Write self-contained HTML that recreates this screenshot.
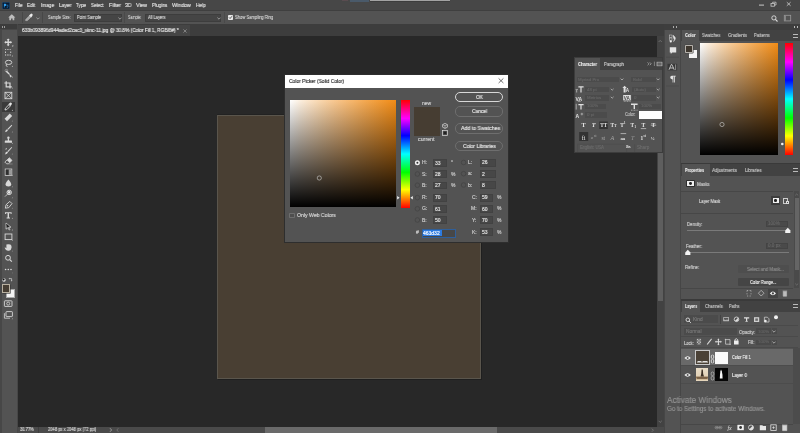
<!DOCTYPE html>
<html><head><meta charset="utf-8">
<style>
*{margin:0;padding:0;box-sizing:border-box}
html,body{width:800px;height:433px;overflow:hidden;background:#535353;font-family:"Liberation Sans",sans-serif;color:#d6d6d6}
.a{position:absolute}
.t{position:absolute;white-space:nowrap;line-height:1;will-change:transform;-webkit-text-stroke:0.15px currentColor}
.t[style*="bold"]{-webkit-text-stroke:0.08px currentColor}
</style></head><body>
<!-- menu bar -->
<div class="a" style="left:0;top:0;width:800px;height:10px;background:#474747"></div>
<div class="a" style="left:0;top:10px;width:800px;height:1px;background:#3f3f3f"></div>
<!-- options bar -->
<div class="a" style="left:0;top:11px;width:800px;height:13px;background:#535353"></div>
<!-- tab bar -->
<div class="a" style="left:17px;top:24px;width:648px;height:12px;background:#3d3d3d"></div>
<div class="a" style="left:17px;top:25px;width:173px;height:11px;background:#454545"></div>
<!-- canvas -->
<div class="a" style="left:18px;top:36px;width:639px;height:391px;background:#282828"></div>
<!-- doc -->
<div class="a" style="left:217px;top:115px;width:264px;height:264px;background:#493f33;border:1px solid #5a554c;box-shadow:1px 1px 0 #1f1f1f,0 -1px 0 #222"></div>
<!-- status bar -->
<div class="a" style="left:17px;top:427px;width:648px;height:6px;background:#4a4a4a"></div>
<div class="a" style="left:265px;top:427px;width:232px;height:6px;background:#6a6a6a"></div>
<!-- vertical scrollbar -->
<div class="a" style="left:657px;top:36px;width:7px;height:391px;background:#424242"></div>
<div class="a" style="left:657.5px;top:60px;width:5.5px;height:241px;background:#5e5e5e"></div>
<!-- left toolbar -->
<div class="a" style="left:0;top:24px;width:18px;height:409px;background:#474747"></div>
<div class="a" style="left:1.5px;top:29.6px;width:15px;height:404px;background:#535353"></div>
<div class="a" style="left:0;top:24px;width:17px;height:5px;background:#3c3c3c"></div>
<div class="a" style="left:2.2px;top:25.8px;width:3.2px;height:1.8px;border-left:1.1px solid #9a9a9a;border-right:1.1px solid #9a9a9a"></div>
<div class="a" style="left:2px;top:102px;width:12.5px;height:9.7px;background:#3a3a3a"></div>
<!-- right dock header -->
<div class="a" style="left:664px;top:24px;width:136px;height:6px;background:#3e3e3e"></div>
<!-- icon strip -->
<div class="a" style="left:664px;top:30px;width:17px;height:403px;background:#535353;border-left:1px solid #464646;border-right:1px solid #464646"></div>
<!-- color panel -->
<div class="a" style="left:681px;top:30px;width:119px;height:133px;background:#535353"></div>
<div class="a" style="left:681px;top:30px;width:119px;height:11px;background:#424242"></div>
<div class="a" style="left:682px;top:30px;width:17px;height:11px;background:#535353"></div>
<div class="a" style="left:700px;top:43px;width:78px;height:112px;background:linear-gradient(to top,#000,rgba(0,0,0,0)),linear-gradient(to right,rgb(255,255,255) 0%,rgb(253,239,222) 10%,rgb(252,226,196) 20%,rgb(250,214,171) 30%,rgb(249,202,148) 40%,rgb(248,191,126) 50%,rgb(247,181,104) 60%,rgb(245,170,83) 70%,rgb(244,160,62) 80%,rgb(243,150,42) 90%,rgb(242,140,22) 100%)"></div>
<div class="a" style="left:785px;top:43px;width:8px;height:112px;background:linear-gradient(to bottom,#f00,#f0f 17%,#00f 33%,#0ff 50%,#0f0 67%,#ff0 83%,#f00)"></div>
<!-- properties -->
<div class="a" style="left:681px;top:163px;width:119px;height:136px;background:#535353;border-top:1px solid #3a3a3a"></div>
<div class="a" style="left:681px;top:164px;width:119px;height:12px;background:#424242"></div>
<div class="a" style="left:682px;top:164px;width:28px;height:12px;background:#535353"></div>
<!-- layers -->
<div class="a" style="left:681px;top:299px;width:119px;height:134px;background:#535353;border-top:2px solid #3a3a3a"></div>
<div class="a" style="left:681px;top:301px;width:119px;height:11px;background:#424242"></div>
<div class="a" style="left:682px;top:301px;width:18px;height:11px;background:#535353"></div>
<!-- character panel -->
<div class="a" style="left:574px;top:57px;width:89px;height:96px;background:#535353;border:1px solid #3c3c3c"></div>
<div class="a" style="left:575px;top:58px;width:87px;height:12px;background:#424242"></div>
<div class="a" style="left:575px;top:58px;width:25px;height:12px;background:#535353"></div>
<!-- dialog -->
<div class="a" style="left:284px;top:74px;width:225px;height:169px;background:#535353;border:1px solid #2e2e2e"></div>
<div class="a" style="left:285px;top:75px;width:223px;height:13px;background:#fff"></div>
<div class="a" style="left:290px;top:100px;width:106px;height:107px;background:linear-gradient(to top,#000,rgba(0,0,0,0)),linear-gradient(to right,rgb(255,255,255) 0%,rgb(253,239,222) 10%,rgb(252,226,196) 20%,rgb(250,214,171) 30%,rgb(249,202,148) 40%,rgb(248,191,126) 50%,rgb(247,181,104) 60%,rgb(245,170,83) 70%,rgb(244,160,62) 80%,rgb(243,150,42) 90%,rgb(242,140,22) 100%)"></div>
<div class="a" style="left:401px;top:100px;width:8px;height:108px;background:linear-gradient(to bottom,#f00,#f0f 17%,#00f 33%,#0ff 50%,#0f0 67%,#ff0 83%,#f00)"></div>
<div class="a" style="left:414px;top:107px;width:26px;height:29px;background:#463d32"></div>

<div class="a" style="left:342px;top:0;width:6px;height:1.4px;background:#5a4c50"></div>
<div class="a" style="left:350px;top:0;width:19px;height:1.5px;background:#4a5a6a"></div>
<div class="a" style="left:370px;top:0;width:80px;height:1.3px;background:#a2a2a2"></div>
<div class="a" style="left:370px;top:1.3px;width:80px;height:0.8px;background:#3c3c3c"></div>
<!-- ===== MENU TEXT ===== -->
<svg class="a" style="left:1.5px;top:1.5px" width="8" height="7.5" viewBox="0 0 8 7.5"><rect x="0.3" y="0.3" width="7.4" height="6.9" rx="1.2" fill="#0a1a30" stroke="#1f5a8e" stroke-width="0.5"/><path d="M1.9 5.6V1.8H3.2Q4.4 1.8 4.4 2.9Q4.4 4 3.2 4H2.6V5.6Z" fill="#2ea0f0"/><path d="M6.4 3.2Q5.8 2.9 5.3 3.1Q4.9 3.4 5.4 3.8Q6.3 4.2 6 5Q5.5 5.6 4.7 5.3" fill="none" stroke="#2ea0f0" stroke-width="0.55"/></svg>
<div id="menu" style="font-size:5.6px;color:#e2e2e2">
<div class="t" style="left:14.62px;top:3.0px;transform:scaleX(0.833);transform-origin:0 0">File</div>
<div class="t" style="left:27.00px;top:3.0px;transform:scaleX(0.850);transform-origin:0 0">Edit</div>
<div class="t" style="left:40.58px;top:3.0px;transform:scaleX(0.844);transform-origin:0 0">Image</div>
<div class="t" style="left:58.58px;top:3.0px;transform:scaleX(0.893);transform-origin:0 0">Layer</div>
<div class="t" style="left:76.00px;top:3.0px;transform:scaleX(0.833);transform-origin:0 0">Type</div>
<div class="t" style="left:91.00px;top:3.0px;transform:scaleX(0.812);transform-origin:0 0">Select</div>
<div class="t" style="left:109.00px;top:3.0px;transform:scaleX(0.958);transform-origin:0 0">Filter</div>
<div class="t" style="left:125.00px;top:3.0px;transform:scaleX(0.929);transform-origin:0 0">3D</div>
<div class="t" style="left:136.00px;top:3.0px;transform:scaleX(0.917);transform-origin:0 0">View</div>
<div class="t" style="left:152.00px;top:3.0px;transform:scaleX(0.833);transform-origin:0 0">Plugins</div>
<div class="t" style="left:172.00px;top:3.0px;transform:scaleX(0.950);transform-origin:0 0">Window</div>
<div class="t" style="left:196.00px;top:3.0px;transform:scaleX(0.833);transform-origin:0 0">Help</div>
</div>
<!-- window controls -->
<svg class="a" style="left:756px;top:0" width="40" height="10" viewBox="756 0 40 10">
<path d="M759 5.1H764" stroke="#c8c8c8" stroke-width="1"/>
<rect x="771" y="3.4" width="3.4" height="2.8" fill="none" stroke="#c8c8c8" stroke-width="0.8"/>
<path d="M772.6 3.2V2.2H776V5H774.6" fill="none" stroke="#c8c8c8" stroke-width="0.8"/>
<path d="M786.8 2.2L790.6 5.8M790.6 2.2L786.8 5.8" stroke="#d0d0d0" stroke-width="0.8"/>
</svg>
<!-- ===== OPTIONS BAR ===== -->
<svg class="a" style="left:7.8px;top:14.4px" width="8" height="7" viewBox="0 0 8 7"><path d="M3.8 0.2L0.2 3.4H1.3V6.3H3V4.4H4.6V6.3H6.3V3.4H7.4Z" fill="#bdbdbd"/></svg>
<div class="a" style="left:21.6px;top:12px;width:0.8px;height:11px;background:#474747"></div>
<div class="a" style="left:41.6px;top:12px;width:0.8px;height:11px;background:#474747"></div>
<svg class="a" style="left:25px;top:13px" width="8" height="9" viewBox="0 0 8 9"><path d="M0.6 7.6L1 6.2L4.4 2.8L5.8 4.2L2.4 7.6Z" fill="#a8a8a8" stroke="#c8c8c8" stroke-width="0.5"/><path d="M4 2.4L5.6 0.9Q6.6 0.3 7.3 1Q8 1.8 7.4 2.8L6.2 4.6Z" fill="#ececec"/></svg>
<svg class="a" style="left:36px;top:17px" width="4" height="3" viewBox="0 0 4 3"><path d="M0.4 0.6L2 2.2L3.6 0.6" fill="none" stroke="#bbb" stroke-width="0.7"/></svg>
<div class="t" style="left:48.07px;top:14.8px;font-size:5.3px;color:#cfcfcf;transform:scaleX(0.727);transform-origin:0 0">Sample Size:</div>
<div class="a" style="left:74px;top:14px;width:48px;height:7.5px;background:#454545;border:0.5px solid #3d3d3d"></div>
<div class="t" style="left:76.62px;top:15.3px;font-size:5.2px;color:#d8d8d8;transform:scaleX(0.774);transform-origin:0 0">Point Sample</div>
<svg class="a" style="left:117.5px;top:17px" width="4" height="3" viewBox="0 0 4 3"><path d="M0.4 0.6L2 2.2L3.6 0.6" fill="none" stroke="#bbb" stroke-width="0.7"/></svg>
<div class="a" style="left:124px;top:12px;width:1px;height:11px;background:#4a4a4a"></div>
<div class="t" style="left:128.00px;top:14.8px;font-size:5.3px;color:#cfcfcf;transform:scaleX(0.690);transform-origin:0 0">Sample:</div>
<div class="a" style="left:145px;top:14px;width:76px;height:7.5px;background:#454545;border:0.5px solid #3d3d3d"></div>
<div class="t" style="left:148.00px;top:15.3px;font-size:5.2px;color:#d8d8d8;transform:scaleX(0.761);transform-origin:0 0">All Layers</div>
<svg class="a" style="left:216.5px;top:17px" width="4" height="3" viewBox="0 0 4 3"><path d="M0.4 0.6L2 2.2L3.6 0.6" fill="none" stroke="#bbb" stroke-width="0.7"/></svg>
<div class="a" style="left:224px;top:12px;width:1px;height:11px;background:#4a4a4a"></div>
<div class="a" style="left:228px;top:15px;width:4.5px;height:4.5px;background:#e8e8e8;border-radius:0.8px"></div>
<svg class="a" style="left:228px;top:15px" width="5" height="5" viewBox="0 0 5 5"><path d="M1 2.4L2.1 3.5L4 1.2" fill="none" stroke="#333" stroke-width="0.8"/></svg>
<div class="t" style="left:234.64px;top:14.8px;font-size:5.3px;color:#d2d2d2;transform:scaleX(0.776);transform-origin:0 0">Show Sampling Ring</div>
<svg class="a" style="left:771px;top:14.5px" width="7" height="7" viewBox="0 0 7 7"><circle cx="2.9" cy="2.9" r="2.1" fill="none" stroke="#e0e0e0" stroke-width="0.9"/><path d="M4.4 4.4L6.5 6.5" stroke="#e0e0e0" stroke-width="1.1"/></svg>
<svg class="a" style="left:783px;top:14px" width="9" height="8" viewBox="0 0 9 8"><rect x="1.3" y="1.3" width="6.4" height="5.6" fill="none" stroke="#9a9a9a" stroke-width="0.8"/><rect x="1.3" y="1.3" width="1.6" height="5.6" fill="#8a8a8a"/></svg>
<!-- tab text -->
<div class="t" style="left:22.00px;top:28px;font-size:5.1px;color:#e6e6e6;letter-spacing:-0.05px;transform:scaleX(0.946);transform-origin:0 0">633b093896d944aded2cac3_sknc-11.jpg @ 30.8% (Color Fill 1, RGB/8#) *</div>
<svg class="a" style="left:182.5px;top:28.5px" width="4" height="4" viewBox="0 0 4 4"><path d="M0.4 0.4L3.6 3.6M3.6 0.4L0.4 3.6" stroke="#aaa" stroke-width="0.6"/></svg>


<svg class="a" style="left:640px;top:36px" width="25" height="397" viewBox="640 36 25 397">
<path d="M658.6 42L660.2 40.4L661.8 42" fill="none" stroke="#8a8a8a" stroke-width="0.6"/>
<path d="M658.6 420.8L660.2 422.4L661.8 420.8" fill="none" stroke="#8a8a8a" stroke-width="0.6"/>
<path d="M651.8 428.6L653.4 430.2L651.8 431.8" fill="none" stroke="#8a8a8a" stroke-width="0.6"/>
</svg>
<!-- ===== TOOLBAR ICONS ===== -->
<svg class="a" style="left:0;top:0" width="18" height="433" viewBox="0 0 18 433" fill="#d8d8d8" stroke="none">
<g id="tri" fill="#bdbdbd"><path d="M13.2 45.2L13.2 46.6L11.8 46.6Z"/></g>
<!-- move -->
<path d="M8.2 38.4L9.8 40.1H8.9V41.6H10.5V40.8L12.1 42.3L10.5 43.8V43H8.9V44.6H9.8L8.2 46.2L6.6 44.6H7.5V43H5.9V43.8L4.3 42.3L5.9 40.8V41.6H7.5V40.1H6.6Z"/>
<path d="M13.2 44.8V46.2H11.8Z" fill="#aaa"/>
<!-- marquee -->
<path d="M5 49.2h1.2v0.9h-1.2zM7.2 49.2h1.4v0.9h-1.4zM9.6 49.2h1.2v0.9h-1.2zM5 51.6h0.9v1.4h-0.9zM10.3 51.6h0.9v1.4h-0.9zM5 54.6h1.2v0.9h-1.2zM7.2 54.6h1.4v0.9h-1.4zM9.6 54.6h1.2v0.9h-1.2z"/>
<path d="M13 55V56.4H11.6Z" fill="#aaa"/>
<!-- lasso -->
<ellipse cx="8.6" cy="62.4" rx="3.2" ry="2.1" fill="none" stroke="#d8d8d8" stroke-width="0.9"/>
<path d="M6.4 64L6.2 66L7.6 66.6" fill="none" stroke="#d8d8d8" stroke-width="0.8"/>
<path d="M13 65.6V67H11.6Z" fill="#aaa"/>
<!-- quick select -->
<path d="M6.6 70.6L9.6 73.6L8.6 74.6L5.6 71.6Z"/>
<path d="M9 73.6L12 76.2L10.2 77.4Z"/>
<circle cx="6.4" cy="70.6" r="1.3" fill="none" stroke="#bbb" stroke-width="0.5"/>
<path d="M13 76.2V77.6H11.6Z" fill="#aaa"/>
<!-- crop -->
<path d="M6.2 81.2V86.8H11.8" fill="none" stroke="#d8d8d8" stroke-width="1.2"/>
<path d="M4.4 83H10V88.6" fill="none" stroke="#d8d8d8" stroke-width="1.2"/>
<path d="M13 87.2V88.6H11.6Z" fill="#aaa"/>
<!-- frame -->
<rect x="5" y="92.3" width="6.8" height="6.4" fill="none" stroke="#d8d8d8" stroke-width="0.9"/>
<path d="M5 92.3L11.8 98.7M11.8 92.3L5 98.7" stroke="#d8d8d8" stroke-width="0.7"/>
<!-- eyedropper -->
<path d="M5 110L5.4 108.2L9 104.6L10.4 106L6.8 109.6Z" fill="none" stroke="#e0e0e0" stroke-width="0.9"/>
<path d="M8.6 104L10 102.8Q11 102.2 11.6 102.9Q12.3 103.6 11.6 104.6L10.6 106Z" fill="#e6e6e6"/>
<path d="M13 109.6V111H11.6Z" fill="#aaa"/>
<!-- healing -->
<path d="M4.6 118.8L9.8 113.6L12.2 116L7 121.2Z"/>
<path d="M13 120.2V121.6H11.6Z" fill="#888"/>
<!-- brush -->
<path d="M11.6 124.8L12.2 125.4L8.2 129.8L7.4 129Z"/>
<path d="M7.2 129.2L8 130Q7.6 132 4.8 132.2Q5.6 131.4 5.6 130.4Q6 129.4 7.2 129.2Z"/>
<path d="M13 131V132.4H11.6Z" fill="#888"/>
<!-- stamp -->
<circle cx="8.4" cy="137.8" r="1.2"/>
<path d="M7.8 138.8H9V140.4H11.6Q12 140.6 12 141.6V142.8H4.8V141.6Q4.8 140.6 5.2 140.4H7.8Z"/>
<path d="M13 142.6V144H11.6Z" fill="#999"/>
<!-- history brush -->
<path d="M11.6 147L12.2 147.6L8.2 152L7.4 151.2Z"/>
<path d="M7.2 151.4L8 152.2Q7.6 154.2 4.8 154.4Q5.6 153.6 5.6 152.6Q6 151.6 7.2 151.4Z"/>
<path d="M4.8 149.2L7 147.8L6.6 149.6Z" fill="#cfcfcf"/>
<path d="M13 153.2V154.6H11.6Z" fill="#888"/>
<!-- eraser -->
<path d="M9.4 157.8L12 160.4L8.6 163.8H6.6L4.8 162L9.4 157.8Z" fill="none" stroke="#d8d8d8" stroke-width="0.8"/>
<path d="M9.4 157.8L12 160.4L9.6 162.8L7 160.2Z"/>
<path d="M8.6 164H12.6" stroke="#aaa" stroke-width="0.5"/>
<!-- gradient -->
<rect x="5.2" y="169" width="6.6" height="6.4" fill="none" stroke="#d0d0d0" stroke-width="0.8"/>
<rect x="5.8" y="169.6" width="3" height="5.2" fill="#303030"/>
<rect x="8.8" y="169.6" width="2.6" height="5.2" fill="#9a9a9a"/>
<path d="M13 174.6V176H11.6Z" fill="#999"/>
<!-- blur -->
<path d="M8.4 179.6Q11.2 183 11.2 184.2Q11.2 186.4 8.4 186.4Q5.6 186.4 5.6 184.2Q5.6 183 8.4 179.6Z"/>
<path d="M13 185.8V187.2H11.6Z" fill="#888"/>
<!-- dodge -->
<circle cx="9.2" cy="192.4" r="2.2" fill="none" stroke="#e0e0e0" stroke-width="1"/>
<circle cx="9.2" cy="192.4" r="1.3" fill="#e8e8e8"/>
<path d="M7.6 194L5 196.6" stroke="#d8d8d8" stroke-width="0.8"/>
<path d="M13 196.8V198.2H11.6Z" fill="#888"/>
<!-- pen -->
<path d="M9.8 201.4L12 203.6L8.8 207.6L5.4 208.2L6 204.8Z" fill="none" stroke="#d8d8d8" stroke-width="0.9"/>
<circle cx="7.6" cy="205.8" r="0.7"/>
<path d="M13 207.4V208.8H11.6Z" fill="#888"/>
<!-- type -->
<path d="M5 212.2H11.6V214H10.8L10.6 213.2H9V217.6H10V218.4H6.6V217.6H7.6V213.2H6L5.8 214H5Z"/>
<path d="M13 217.6V219H11.6Z" fill="#999"/>
<!-- path select -->
<path d="M6 223L11 227.2L8.6 227.4L10 229.6L9.2 230L7.8 227.8L6 229.2Z" fill="none" stroke="#d8d8d8" stroke-width="0.7"/>
<path d="M6.2 223.6L9.2 226.6L7 227.4Z" fill="#202020"/>
<path d="M13 229V230.4H11.6Z" fill="#999"/>
<!-- rect -->
<rect x="5.1" y="234" width="6.8" height="5.6" fill="none" stroke="#d8d8d8" stroke-width="0.9"/>
<path d="M13 239.6V241H11.6Z" fill="#999"/>
<!-- hand -->
<path d="M6.4 244.4Q8.6 243.8 10.4 244.6Q11.8 245.6 11.6 247.6Q11.4 250.2 9 250.8Q7 251 5.8 249.8L4.6 247.8Q5 247.2 5.8 247.8L6.4 248.2Z"/>
<path d="M13 250.2V251.6H11.6Z" fill="#888"/>
<!-- zoom -->
<circle cx="8" cy="257.8" r="2.4" fill="none" stroke="#d8d8d8" stroke-width="1"/>
<path d="M9.8 259.6L11.8 261.6" stroke="#d8d8d8" stroke-width="1.2"/>
<!-- more -->
<circle cx="5.6" cy="269.5" r="0.8"/><circle cx="8.3" cy="269.5" r="0.8"/><circle cx="11" cy="269.5" r="0.8"/>
<path d="M13 272.2V273.2H12Z" fill="#888"/>
<!-- default colors / swap -->
<circle cx="4" cy="280" r="1.7" fill="#e6e6e6"/>
<circle cx="3.6" cy="279.6" r="1" fill="#111"/>
<path d="M9.2 278.6H11.6V281" fill="none" stroke="#cfcfcf" stroke-width="0.7"/>
<path d="M8.6 278.6L9.6 277.8V279.4Z M11.6 281.6L10.8 280.6H12.4Z" fill="#cfcfcf"/>
<!-- quick mask -->
<rect x="4.4" y="300.8" width="7.6" height="5.6" rx="0.6" fill="none" stroke="#d8d8d8" stroke-width="0.9"/>
<circle cx="8.2" cy="303.6" r="1.5" fill="none" stroke="#d8d8d8" stroke-width="0.8"/>
<!-- screen mode -->
<rect x="6" y="311.6" width="6.4" height="5" rx="0.6" fill="none" stroke="#d8d8d8" stroke-width="0.9"/>
<path d="M4.4 313.2V318.2H10" fill="none" stroke="#d8d8d8" stroke-width="0.8"/>
<path d="M13 317.8V319.2H11.6Z" fill="#999"/>
</svg>
<div class="a" style="left:6px;top:289px;width:8.6px;height:9px;background:#f4f4f4;border:0.5px solid #aaa"></div>
<div class="a" style="left:2px;top:284.4px;width:7.6px;height:8.4px;background:#463d32;border:0.8px solid #b8b0a0;box-shadow:0.6px 0.6px 0 #333"></div>

<!-- ===== RIGHT DOCK CONTENT ===== -->
<div class="a" style="left:673px;top:26.2px;width:4px;height:2.2px;border-left:1.4px solid #aaa;border-right:1.4px solid #aaa"></div>
<div class="a" style="left:794px;top:26.2px;width:4px;height:2.2px;border-left:1.4px solid #bbb;border-right:1.4px solid #bbb"></div>
<!-- color tabs -->
<div class="t" style="left:684.71px;top:32.7px;font-size:5.3px;font-weight:bold;color:#f0f0f0;transform:scaleX(0.775);transform-origin:0 0">Color</div>
<div class="t" style="left:702.15px;top:32.7px;font-size:5.3px;color:#c4c4c4;transform:scaleX(0.800);transform-origin:0 0">Swatches</div>
<div class="t" style="left:728.00px;top:32.7px;font-size:5.3px;color:#c4c4c4;transform:scaleX(0.826);transform-origin:0 0">Gradients</div>
<div class="t" style="left:754.00px;top:32.7px;font-size:5.3px;color:#c4c4c4;transform:scaleX(0.800);transform-origin:0 0">Patterns</div>
<div class="a" style="left:793px;top:33.5px;width:5px;height:4px;border-top:0.8px solid #bbb;border-bottom:0.8px solid #bbb;background:linear-gradient(#424242 40%,#bbb 40%,#bbb 60%,#424242 60%)"></div>
<!-- fg/bg swatches color panel -->
<div class="a" style="left:689.1px;top:49.9px;width:7.9px;height:7.9px;background:#f4f4f4"></div>
<div class="a" style="left:685px;top:45.3px;width:8.2px;height:8.2px;background:#3e372f;border:1px solid #b4b0aa;border-radius:0.8px;box-shadow:0 0 0 0.5px #444"></div>
<svg class="a" style="left:680px;top:40px" width="120" height="120" viewBox="680 40 120 120">
<circle cx="722" cy="124.5" r="2.1" fill="none" stroke="#d0d0d0" stroke-width="0.6"/>
<circle cx="782.3" cy="144" r="1.3" fill="#f0f0f0"/>
</svg>
<!-- properties tabs -->
<div class="t" style="left:685.00px;top:167.5px;font-size:5.3px;font-weight:bold;color:#f0f0f0;transform:scaleX(0.725);transform-origin:0 0">Properties</div>
<div class="t" style="left:712.00px;top:167.5px;font-size:5.3px;color:#c4c4c4;transform:scaleX(0.855);transform-origin:0 0">Adjustments</div>
<div class="t" style="left:744.91px;top:167.5px;font-size:5.3px;color:#c4c4c4;transform:scaleX(0.815);transform-origin:0 0">Libraries</div>
<div class="a" style="left:793px;top:167.8px;width:5px;height:4px;border-top:0.8px solid #bbb;border-bottom:0.8px solid #bbb;background:linear-gradient(#424242 40%,#bbb 40%,#bbb 60%,#424242 60%)"></div>
<div class="a" style="left:686.3px;top:179.8px;width:8.4px;height:7.6px;background:#2e2e2e;border-radius:1px"></div>
<div class="a" style="left:687.3px;top:180.9px;width:6.4px;height:5.4px;background:#f0f0f0"></div>
<div class="a" style="left:689.1px;top:182.2px;width:2.8px;height:2.8px;background:#222;border-radius:50%"></div>
<div class="t" style="left:696.68px;top:181.5px;font-size:5px;color:#d0d0d0;transform:scaleX(0.864);transform-origin:0 0">Masks</div>
<div class="a" style="left:681px;top:190.5px;width:112px;height:0.8px;background:#474747"></div>
<div class="t" style="left:699.00px;top:198.8px;font-size:5.1px;color:#d8d8d8;transform:scaleX(0.808);transform-origin:0 0">Layer Mask</div>
<div class="a" style="left:771px;top:196px;width:9px;height:8.6px;background:#3c3c3c"></div>
<div class="a" style="left:772.5px;top:198px;width:6px;height:5px;background:#f0f0f0"></div>
<div class="a" style="left:774.3px;top:199.3px;width:2.4px;height:2.4px;background:#222;border-radius:50%"></div>
<div class="a" style="left:783px;top:197.5px;width:5px;height:6px;border:0.7px dashed #ccc"></div>
<div class="a" style="left:786px;top:201px;width:3.4px;height:3.4px;background:#535353;border:0.7px solid #ddd"></div>
<div class="a" style="left:681px;top:212.5px;width:112px;height:0.8px;background:#474747"></div>
<!-- prop scrollbar -->
<div class="a" style="left:794px;top:191px;width:5.4px;height:97px;background:#4a4a4a"></div>
<div class="a" style="left:794.6px;top:198px;width:4.2px;height:72px;background:#656565"></div>
<svg class="a" style="left:794px;top:192px" width="6" height="96" viewBox="0 0 6 96"><path d="M1.2 3.4L2.7 2L4.2 3.4" fill="none" stroke="#888" stroke-width="0.5"/><path d="M1.2 91.6L2.7 93L4.2 91.6" fill="none" stroke="#888" stroke-width="0.5"/></svg>
<div class="t" style="left:687.19px;top:221.8px;font-size:5px;color:#cfcfcf;transform:scaleX(0.844);transform-origin:0 0">Density:</div>
<div class="a" style="left:765.5px;top:221px;width:22px;height:6px;background:#4a4a4a;border:0.5px solid #444"></div>
<div class="t" style="left:767.5px;top:222.2px;font-size:4.6px;color:#666666">100%</div>
<div class="a" style="left:687px;top:229.5px;width:102px;height:1px;background:#7a7a7a"></div>
<svg class="a" style="left:784px;top:227px" width="8" height="7" viewBox="0 0 8 7"><path d="M3.8 0.8L6.4 3.4V6H1.2V3.4Z" fill="#f2f2f2"/></svg>
<div class="t" style="left:686.38px;top:243.8px;font-size:5px;color:#cfcfcf;transform:scaleX(0.859);transform-origin:0 0">Feather:</div>
<div class="a" style="left:765.5px;top:242.8px;width:22px;height:6px;background:#4a4a4a;border:0.5px solid #444"></div>
<div class="t" style="left:767.5px;top:244px;font-size:4.6px;color:#666666">0.0 px</div>
<div class="a" style="left:687px;top:251.5px;width:102px;height:1px;background:#7a7a7a"></div>
<svg class="a" style="left:684px;top:249px" width="8" height="7" viewBox="0 0 8 7"><path d="M3.8 0.8L6.4 3.4V6H1.2V3.4Z" fill="#f2f2f2"/></svg>
<div class="t" style="left:685.21px;top:264.8px;font-size:5px;color:#cfcfcf;transform:scaleX(0.886);transform-origin:0 0">Refine:</div>
<div class="a" style="left:738px;top:265.3px;width:51px;height:7.7px;background:#4e4e4e;border-radius:1px"></div>
<div class="t" style="left:746.60px;top:266.7px;font-size:5px;color:#8c8c8c;transform:scaleX(0.897);transform-origin:0 0">Select and Mask...</div>
<div class="a" style="left:738px;top:278.3px;width:51px;height:8.2px;background:#454545;border-radius:1px"></div>
<div class="t" style="left:750.40px;top:280px;font-size:5px;color:#eeeeee;transform:scaleX(0.819);transform-origin:0 0">Color Range...</div>
<div class="a" style="left:681px;top:288px;width:112px;height:0.6px;background:#474747"></div>
<div class="a" style="left:768px;top:288.6px;width:9.8px;height:9.8px;background:#444"></div>
<svg class="a" style="left:740px;top:286px" width="60" height="14" viewBox="740 286 60 14">
<path d="M747 290.5h1.2M749.6 290.5h1.2M747 296h1.2M749.6 296h1.2M747 290.5v1.2M747 293.2v1.2M751 290.5v1.2M751 293.2v1.2" stroke="#bbb" stroke-width="0.7"/>
<path d="M761.2 290.3L764 293.2L761.2 296L758.4 293.2Z" fill="none" stroke="#bbb" stroke-width="0.8"/>
<path d="M769.8 293.4Q772.9 289.8 776 293.4Q772.9 297 769.8 293.4Z" fill="#f0f0f0"/>
<circle cx="772.9" cy="293.4" r="1.1" fill="#444"/>
<path d="M782.6 291h4.6M783.2 291.6h3.4v4.6h-3.4Z" fill="#bdbdbd" stroke="#bdbdbd" stroke-width="0.6"/>
</svg>
<!-- layers tabs -->
<div class="t" style="left:684.85px;top:303.6px;font-size:5.3px;font-weight:bold;color:#f0f0f0;transform:scaleX(0.718);transform-origin:0 0">Layers</div>
<div class="t" style="left:704.64px;top:303.6px;font-size:5.3px;color:#c4c4c4;transform:scaleX(0.795);transform-origin:0 0">Channels</div>
<div class="t" style="left:729.32px;top:303.6px;font-size:5.3px;color:#c4c4c4;transform:scaleX(0.757);transform-origin:0 0">Paths</div>
<div class="a" style="left:793px;top:304.3px;width:5px;height:4px;border-top:0.8px solid #bbb;border-bottom:0.8px solid #bbb;background:linear-gradient(#424242 40%,#bbb 40%,#bbb 60%,#424242 60%)"></div>
<div class="a" style="left:684px;top:315px;width:34px;height:8.4px;background:#4b4b4b"></div>
<svg class="a" style="left:685px;top:317px" width="7" height="7" viewBox="0 0 7 7"><circle cx="2.8" cy="2.8" r="1.8" fill="none" stroke="#e0e0e0" stroke-width="0.9"/><path d="M4.1 4.1L5.8 5.8" stroke="#e0e0e0" stroke-width="1"/></svg>
<div class="t" style="left:692.5px;top:318.2px;font-size:4.8px;color:#7a7a7a">Kind</div>
<div class="a" style="left:720px;top:315px;width:0.6px;height:9px;background:#444"></div>
<svg class="a" style="left:720px;top:312px" width="62" height="14" viewBox="720 312 62 14">
<rect x="723.3" y="317.2" width="5.6" height="4" fill="#cfcfcf"/>
<rect x="723.9" y="317.8" width="4.4" height="1.8" fill="#555"/>
<path d="M723.9 320.2L725.6 318.9L726.8 319.8L727.4 319.3L728.3 320.2Z" fill="#555"/>
<circle cx="736.5" cy="319.3" r="2.3" fill="none" stroke="#e0e0e0" stroke-width="0.8"/>
<path d="M738.1 317.7A2.3 2.3 0 0 1 734.9 320.9Z" fill="#e0e0e0"/>
<path d="M744 317.2H749.2V318.4H747.2V321.2H748V321.8H745.2V321.2H746V318.4H744Z" fill="#e0e0e0"/>
<rect x="754" y="317.2" width="5.2" height="4.8" fill="#d0d0d0"/>
<rect x="755.3" y="318.4" width="2.6" height="2.4" fill="#6a6a6a"/>
<path d="M764.4 317.2H767.4L769 318.8V322H764.4Z" fill="none" stroke="#d8d8d8" stroke-width="0.7"/>
<circle cx="765.4" cy="321" r="1.3" fill="#ececec"/>
<circle cx="776" cy="317.2" r="2" fill="#f0f0f0"/>
</svg>
<div class="a" style="left:681px;top:325.4px;width:117px;height:0.6px;background:#4a4a4a"></div>
<div class="a" style="left:684px;top:328px;width:53px;height:6.5px;background:#4b4b4b"></div>
<div class="t" style="left:686px;top:330px;font-size:4.8px;color:#767676">Normal</div>
<div class="t" style="left:738.67px;top:329.6px;font-size:5px;color:#d0d0d0;transform:scaleX(0.867);transform-origin:0 0">Opacity:</div>
<div class="a" style="left:756.3px;top:328.2px;width:15px;height:5.6px;background:#4a4a4a"></div>
<div class="t" style="left:758px;top:330px;font-size:4.4px;color:#626262">100%</div>
<div class="a" style="left:772px;top:328.2px;width:4.8px;height:5.6px;background:#4a4a4a"></div>
<svg class="a" style="left:772.4px;top:329.6px" width="4" height="3" viewBox="0 0 4 3"><path d="M0.4 0.6L2 2.2L3.6 0.6" fill="none" stroke="#ccc" stroke-width="0.7"/></svg>
<div class="a" style="left:681px;top:336.4px;width:117px;height:0.6px;background:#4a4a4a"></div>
<div class="t" style="left:684.00px;top:340.6px;font-size:5px;color:#d0d0d0;transform:scaleX(0.825);transform-origin:0 0">Lock:</div>
<svg class="a" style="left:695px;top:337px" width="46" height="10" viewBox="695 337 46 10">
<path d="M697 339h1.3v1.3h-1.3zM699.6 339h1.3v1.3h-1.3zM698.3 340.3h1.3v1.3h-1.3zM697 341.6h1.3v1.3h-1.3zM699.6 341.6h1.3v1.3h-1.3zM698.3 342.9h1.3v1.3h-1.3z" fill="#c8c8c8"/>
<rect x="697" y="339" width="3.9" height="5.2" fill="none" stroke="#aaa" stroke-width="0.3"/>
<path d="M711.2 338.6L707.2 343.6L706.8 345L708 344.2L712 339.2Z" fill="#d8d8d8"/>
<path d="M718.4 338.4L719.6 339.6H718.9V341.3H720.6V340.6L721.8 341.8L720.6 343V342.3H718.9V344H719.6L718.4 345.2L717.2 344H717.9V342.3H716.2V343L715 341.8L716.2 340.6V341.3H717.9V339.6H717.2Z" fill="#e0e0e0"/>
<path d="M725.6 338.8V344.2H730.8M724.8 339.6H730V345" fill="none" stroke="#d8d8d8" stroke-width="0.7"/>
<rect x="734" y="340.6" width="4.6" height="4" rx="0.5" fill="#eeeeee"/>
<path d="M734.9 340.8V339.6Q736.3 337.8 737.7 339.6V340.8" fill="none" stroke="#eeeeee" stroke-width="0.8"/>
</svg>
<div class="t" style="left:748.08px;top:340.6px;font-size:4.8px;color:#cfcfcf;transform:scaleX(0.833);transform-origin:0 0">Fill:</div>
<div class="a" style="left:756.3px;top:339.6px;width:15px;height:5.6px;background:#4a4a4a"></div>
<div class="t" style="left:758px;top:339.8px;font-size:4.4px;color:#626262">100%</div>
<div class="a" style="left:772px;top:339.6px;width:4.8px;height:5.6px;background:#4a4a4a"></div>
<svg class="a" style="left:772.4px;top:341px" width="4" height="3" viewBox="0 0 4 3"><path d="M0.4 0.6L2 2.2L3.6 0.6" fill="none" stroke="#ccc" stroke-width="0.7"/></svg>
<div class="a" style="left:681px;top:347.4px;width:117px;height:0.6px;background:#4a4a4a"></div>
<!-- layer rows -->
<div class="a" style="left:681px;top:349.2px;width:112px;height:15.6px;background:#696969"></div>
<div class="a" style="left:681px;top:365px;width:112px;height:0.6px;background:#4c4c4c"></div>
<div class="a" style="left:681px;top:383px;width:112px;height:0.6px;background:#4c4c4c"></div>
<div class="a" style="left:793px;top:347.5px;width:7px;height:76px;background:#4c4c4c"></div>
<svg class="a" style="left:683px;top:354px" width="10" height="26" viewBox="683 354 10 26">
<path d="M684.4 358Q687.6 354.6 690.8 358Q687.6 361.4 684.4 358Z" fill="#f0f0f0"/><circle cx="687.6" cy="358" r="1" fill="#555"/>
<path d="M684.4 375Q687.6 371.6 690.8 375Q687.6 378.4 684.4 375Z" fill="#f0f0f0"/><circle cx="687.6" cy="375" r="1" fill="#555"/>
</svg>
<div class="a" style="left:694.5px;top:350.2px;width:15.5px;height:14.6px;background:#4a4136;border:1px solid #c8c8c8"></div>
<div class="a" style="left:696.5px;top:360.5px;width:11.5px;height:2.6px;background:#9a968e"></div>
<div class="a" style="left:698px;top:361.1px;width:3px;height:1.4px;background:#e0e0e0"></div>
<div class="a" style="left:702.5px;top:361.1px;width:4px;height:1.4px;background:#e0e0e0"></div>
<div class="a" style="left:715.3px;top:351.8px;width:12.5px;height:12.4px;background:#fbfbfb"></div>
<div class="t" style="left:731.72px;top:355.4px;font-size:5.2px;color:#f2f2f2;transform:scaleX(0.756);transform-origin:0 0">Color Fill 1</div>
<div class="a" style="left:695.6px;top:368.4px;width:12.4px;height:13px;background:linear-gradient(to bottom,#e8dcc6 0%,#e2d2b8 60%,#8a6e4e 72%,#c9b08a 85%,#efe2cc 100%)"></div>
<svg class="a" style="left:695.6px;top:368.4px" width="12.4" height="13" viewBox="0 0 12.4 13"><path d="M5.6 1.6L6.8 1.6L7.2 6L8 8.6H4.6L5.2 6Z" fill="#3a2e22"/><path d="M1 9.6H11.4V10.6H1Z" fill="#5a4430"/></svg>
<div class="a" style="left:715.3px;top:368.4px;width:12.5px;height:13px;background:#050505"></div>
<svg class="a" style="left:715.3px;top:368.4px" width="12.5" height="13" viewBox="0 0 12.5 13"><path d="M6 1.6L6.8 3.2L7.4 6.4L7.6 10.4H4.8L5 6.4L5.4 3.2Z" fill="#f8f8f8"/></svg>
<svg class="a" style="left:709.8px;top:353px" width="5" height="30" viewBox="0 0 5 30">
<path d="M1.5 2.2v3.2M3.5 2.2v3.2M1.5 6.6v3.2M3.5 6.6v3.2" stroke="#e0e0e0" stroke-width="0.6"/>
<rect x="1.2" y="2" width="2.6" height="3.6" rx="1.2" fill="none" stroke="#e0e0e0" stroke-width="0.6"/>
<rect x="1.2" y="6.4" width="2.6" height="3.6" rx="1.2" fill="none" stroke="#e0e0e0" stroke-width="0.6"/>
<rect x="1.2" y="19" width="2.6" height="3.6" rx="1.2" fill="none" stroke="#d0d0d0" stroke-width="0.6"/>
<rect x="1.2" y="23.4" width="2.6" height="3.6" rx="1.2" fill="none" stroke="#d0d0d0" stroke-width="0.6"/>
</svg>
<div class="t" style="left:731.69px;top:372.5px;font-size:5.2px;color:#f0f0f0;transform:scaleX(0.859);transform-origin:0 0">Layer 0</div>
<div class="a" style="left:681px;top:423.5px;width:112px;height:0.6px;background:#474747"></div>
<svg class="a" style="left:712px;top:422px" width="80" height="11" viewBox="712 422 80 11">
<path d="M715.6 427.6h2.4M719 427.6h2.4" stroke="#999" stroke-width="0.8"/>
<rect x="715" y="426.4" width="3.4" height="2.4" rx="1.2" fill="none" stroke="#999" stroke-width="0.6"/>
<rect x="718.6" y="426.4" width="3.4" height="2.4" rx="1.2" fill="none" stroke="#999" stroke-width="0.6"/>
<text x="727.4" y="430" font-family="Liberation Serif" font-style="italic" font-size="6" fill="#e0e0e0">fx</text>
<rect x="737.4" y="424.8" width="6.4" height="5.4" fill="#f0f0f0"/>
<circle cx="740.6" cy="427.5" r="1.4" fill="#333"/>
<circle cx="751" cy="427.5" r="2.5" fill="none" stroke="#e0e0e0" stroke-width="0.8"/>
<path d="M752.8 425.7A2.5 2.5 0 0 1 749.2 429.3Z" fill="#e0e0e0"/>
<path d="M759.8 425.2H762.4L763 426H766V430.2H759.8Z" fill="#e6e6e6"/>
<rect x="770.8" y="424.8" width="5.4" height="5.6" fill="none" stroke="#e0e0e0" stroke-width="0.8"/>
<path d="M772.2 427.6h2.6M773.5 426.3v2.6" stroke="#e0e0e0" stroke-width="0.7"/>
<path d="M782 425h5.4M782.6 425.6h4.2v5h-4.2Z" fill="#d6d6d6" stroke="#d6d6d6" stroke-width="0.6"/>
</svg>

<!-- ===== ICON STRIP ===== -->
<svg class="a" style="left:664px;top:30px" width="17" height="70" viewBox="664 30 17 70">
<rect x="669.6" y="35" width="2.4" height="2.4" fill="none" stroke="#c8c8c8" stroke-width="0.55"/>
<rect x="669.6" y="38" width="2.4" height="2.2" fill="none" stroke="#c8c8c8" stroke-width="0.55"/>
<circle cx="670.8" cy="41.4" r="1.1" fill="#f0f0f0"/>
<path d="M673 35.2Q676.2 37.4 675.2 39.2L673.6 41.6Q675 39.4 673.4 37.4Z" fill="#e0e0e0" stroke="#e0e0e0" stroke-width="0.5"/>
<path d="M669.8 47.3H676.2V52.4H672.2L670.8 54V52.4H669.8Z" fill="#e4e4e4"/>
<line x1="666" y1="57.2" x2="679" y2="57.2" stroke="#474747" stroke-width="0.7"/>
<rect x="667.5" y="63.8" width="9.6" height="6.6" fill="#383838"/>
<path d="M669 69.8L671.2 64.6H672L674.2 69.8M669.8 68H673.4" fill="none" stroke="#e6e6e6" stroke-width="0.75"/>
<path d="M675.6 64.4V70" stroke="#e6e6e6" stroke-width="0.5"/>
<path d="M670.2 75.8H675.8V76.6H675V82.6H674.2V76.6H673.4V82.6H672.6V79.4Q670.2 79.4 670.2 77.6Q670.2 75.8 671.8 75.8Z" fill="#e2e2e2"/>
<line x1="666" y1="86" x2="679" y2="86" stroke="#474747" stroke-width="0.7"/>
</svg>
<!-- ===== CHARACTER PANEL CONTENT ===== -->
<div class="t" style="left:578.06px;top:61.6px;font-size:5.2px;font-weight:bold;color:#f0f0f0;transform:scaleX(0.781);transform-origin:0 0">Character</div>
<div class="t" style="left:604.00px;top:61.6px;font-size:5.2px;color:#c8c8c8;transform:scaleX(0.829);transform-origin:0 0">Paragraph</div>
<svg class="a" style="left:645px;top:60px" width="18" height="8" viewBox="645 60 18 8">
<path d="M647.6 62.4L649 63.8L647.6 65.2M649.8 62.4L651.2 63.8L649.8 65.2" fill="none" stroke="#ccc" stroke-width="0.6"/>
<path d="M654.4 61.6V66" stroke="#aaa" stroke-width="0.6"/>
<rect x="657" y="62.2" width="5" height="3.6" fill="none" stroke="#bbb" stroke-width="0.7"/>
<path d="M657 64h5" stroke="#bbb" stroke-width="0.6"/>
</svg>
<div class="a" style="left:576.6px;top:77px;width:42px;height:5.4px;background:#4b4b4b"></div>
<div class="t" style="left:578px;top:77.8px;font-size:4.4px;color:#646464">Myriad Pro</div>
<div class="a" style="left:631.3px;top:77px;width:25px;height:5.4px;background:#4b4b4b"></div>
<div class="t" style="left:633px;top:77.8px;font-size:4.4px;color:#646464">Bold</div>
<div class="a" style="left:584.7px;top:87.3px;width:24.3px;height:5.2px;background:#4b4b4b"></div>
<div class="t" style="left:586.5px;top:88px;font-size:4.4px;color:#646464">48 pt</div>
<div class="a" style="left:584.7px;top:95.4px;width:24.3px;height:5.2px;background:#4b4b4b"></div>
<div class="t" style="left:586.5px;top:96px;font-size:4.4px;color:#646464">Metrics</div>
<div class="a" style="left:631.9px;top:87.3px;width:24.1px;height:5.2px;background:#4b4b4b"></div>
<div class="t" style="left:633.5px;top:88px;font-size:4.4px;color:#646464">(Auto)</div>
<div class="a" style="left:631.9px;top:95.4px;width:24.1px;height:5.2px;background:#4b4b4b"></div>
<div class="t" style="left:633.5px;top:96px;font-size:4.4px;color:#646464">0</div>
<div class="a" style="left:584.7px;top:103.5px;width:21.3px;height:5.2px;background:#4b4b4b"></div>
<div class="t" style="left:586.5px;top:104.2px;font-size:4.4px;color:#646464">100%</div>
<div class="a" style="left:638.8px;top:103.5px;width:21.9px;height:5.2px;background:#4b4b4b"></div>
<div class="t" style="left:640.5px;top:104.2px;font-size:4.4px;color:#646464">100%</div>
<div class="a" style="left:585px;top:112px;width:22px;height:5.6px;background:#4b4b4b"></div>
<div class="t" style="left:586.5px;top:112.8px;font-size:4.4px;color:#646464">0 pt</div>
<div class="t" style="left:624.8px;top:113.2px;font-size:4.6px;color:#bdbdbd;transform:scaleX(0.85);transform-origin:0 0">Color:</div>
<div class="a" style="left:638.8px;top:111px;width:23.1px;height:7.5px;background:#fdfdfd"></div>
<svg class="a" style="left:574px;top:70px" width="90" height="84" viewBox="574 70 90 84">
<g fill="none" stroke="#c8c8c8" stroke-width="0.7">
<path d="M620.6 78.6L622 80L623.4 78.6M656.8 78.6L658.2 80L659.6 78.6M610.8 88.8L612.2 90.2L613.6 88.8M610.8 96.8L612.2 98.2L613.6 96.8M656.8 88.8L658.2 90.2L659.6 88.8M656.8 96.8L658.2 98.2L659.6 96.8"/>
</g>
<g fill="#e0e0e0">
<path d="M578.4 86.2H583.6V87.4H581.6V92.4H580.4V87.4H578.4Z"/><path d="M575.6 89.4H578V90H577.1V92.4H576.5V90H575.6Z"/>
<text x="575.6" y="100.6" font-family="Liberation Sans" font-size="5" font-weight="bold" fill="#e0e0e0">VA</text>
<path d="M577.8 101.2h3" stroke="#e0e0e0" stroke-width="0.6"/>
<path d="M578.4 104H583.6V105.2H581.6V109.4H580.4V105.2H578.4Z"/><path d="M576.2 103.8V109.6" stroke="#e0e0e0" stroke-width="0.6"/>
<text x="575.4" y="118" font-family="Liberation Sans" font-size="5" font-weight="bold" fill="#e0e0e0">A</text>
<path d="M580.6 114h2.6M581.9 112.8v2.6" stroke="#e0e0e0" stroke-width="0.5"/>
<path d="M624.6 85.8L626.8 88H625.6V92.4H623.6V88H622.4Z" fill="#e0e0e0"/>
<text x="625.8" y="92.4" font-family="Liberation Sans" font-size="4.6" font-weight="bold" fill="#e0e0e0">A</text>
<rect x="623.2" y="95" width="7.6" height="5.4" fill="#e0e0e0"/>
<text x="623.8" y="99.8" font-family="Liberation Sans" font-size="4.6" font-weight="bold" fill="#444">VA</text>
<path d="M623.8 101.4h7" stroke="#ccc" stroke-width="0.6" stroke-dasharray="1 0.6"/>
<path d="M631 103.6H637.6V105H635V109H633.6V105H631Z"/><path d="M631 110.2h6.6" stroke="#e0e0e0" stroke-width="0.6" stroke-dasharray="1 0.5"/>
</g>
<g fill="#e8e8e8" font-family="Liberation Serif" font-weight="bold" font-size="6.2">
<rect x="599.3" y="121.5" width="8.5" height="7.5" fill="#333"/>
<text x="581.4" y="127.4">T</text>
<text x="591.8" y="127.4" font-style="italic">T</text>
<text x="600.2" y="127.4" font-size="5.2">TT</text>
<text x="610.6" y="127.4" font-size="5.4">T</text><text x="614.2" y="127.4" font-size="3.6">T</text>
<text x="620.2" y="127.4" font-size="5.4">T</text><text x="624" y="124.4" font-size="3">1</text>
<text x="630.4" y="127.4" font-size="5.4">T</text><text x="634.4" y="128.4" font-size="3">1</text>
<text x="641.4" y="127.4" font-size="5.6">T</text><path d="M640.8 128.6h5.4" stroke="#e8e8e8" stroke-width="0.6"/>
<text x="651.4" y="127.4" font-size="5.6">T</text><path d="M650.8 125.2h5.4" stroke="#e8e8e8" stroke-width="0.6"/>
<rect x="579.2" y="132" width="9" height="9" fill="#333"/>
<text x="581.8" y="139.6" font-size="6" font-weight="normal">fi</text>
<text x="590.8" y="139" font-size="5" font-style="italic" font-weight="normal" fill="#aaa">o</text><text x="594" y="137" font-size="3.6" font-weight="normal" fill="#aaa">st</text>
<text x="601.4" y="139.6" font-size="5.6" font-weight="normal" fill="#aaa">st</text>
<text x="610.6" y="139.6" font-size="6" font-style="italic" font-weight="normal" fill="#aaa">A</text>
<text x="620.4" y="139.8" font-size="4.8">aa</text><path d="M620.6 133.6h5.6" stroke="#e8e8e8" stroke-width="0.6"/>
<text x="631" y="139.6" font-size="6" font-style="italic" font-weight="normal" fill="#999">T</text>
<text x="640.6" y="139.8" font-size="5.4">1</text><text x="643.6" y="136.6" font-size="3.2">st</text>
<text x="651" y="139.6" font-size="4.6">½</text>
</g>
<path d="M577.6 144.2H624.4M577.6 144.2V152M626.6 144.2V152M634.6 144.2V152" stroke="#4a4a4a" stroke-width="0.5" fill="none"/>
</svg>
<div class="t" style="left:580px;top:146.2px;font-size:4.6px;color:#6c6c6c;transform:scaleX(0.88);transform-origin:0 0">English: USA</div>
<div class="t" style="left:626px;top:144.6px;font-size:4.6px;font-weight:bold;color:#cfcfcf">a<span style="font-size:3.6px">a</span></div>
<div class="t" style="left:637px;top:146.2px;font-size:4.6px;color:#6c6c6c">Sharp</div>

<!-- ===== DIALOG CONTENT ===== -->
<div class="t" style="left:289.00px;top:78.6px;font-size:5.6px;color:#2a2a2a;transform:scaleX(0.873);transform-origin:0 0">Color Picker (Solid Color)</div>
<svg class="a" style="left:496px;top:76px" width="10" height="10" viewBox="0 0 10 10"><path d="M2.6 2.4L7.4 7M7.4 2.4L2.6 7" stroke="#333" stroke-width="0.7"/></svg>
<div class="a" style="left:401px;top:100px;width:8.5px;height:108px;background:linear-gradient(to bottom,#f00,#f0f 17%,#00f 33%,#0ff 50%,#0f0 67%,#ff0 83%,#f00)"></div>
<svg class="a" style="left:280px;top:90px" width="230" height="155" viewBox="280 90 230 155">
<circle cx="319.3" cy="178" r="2.1" fill="none" stroke="#d0d0d0" stroke-width="0.6"/>
<path d="M399.6 197.8L397.2 196V199.6Z" fill="#f0f0f0"/>
<path d="M410.4 197.8L412.8 196V199.6Z" fill="#f0f0f0"/>
</svg>
<div class="t" style="left:422.00px;top:101.6px;font-size:4.8px;color:#d0d0d0;transform:scaleX(1.044);transform-origin:0 0">new</div>
<div class="t" style="left:418.47px;top:137.6px;font-size:4.8px;color:#d0d0d0;transform:scaleX(1.107);transform-origin:0 0">current</div>
<svg class="a" style="left:441px;top:122px" width="8" height="14" viewBox="0 0 8 14">
<path d="M4 1.4L6.4 2.6V5.2L4 6.4L1.6 5.2V2.6Z" fill="none" stroke="#ddd" stroke-width="0.7"/><path d="M1.6 2.6L4 3.8L6.4 2.6M4 3.8V6.4" fill="none" stroke="#ddd" stroke-width="0.5"/>
<rect x="1.4" y="8.4" width="5.2" height="5" fill="none" stroke="#ddd" stroke-width="0.7"/><rect x="2.6" y="9.6" width="2.8" height="2.6" fill="#222"/>
</svg>
<div class="a" style="left:455px;top:92.3px;width:48px;height:10.1px;border:1px solid #d8d8d8;border-radius:5px"></div>
<div class="t" style="left:475.97px;top:94.6px;font-size:5.4px;color:#ececec;transform:scaleX(0.888);transform-origin:0 0">OK</div>
<div class="a" style="left:455px;top:106px;width:48px;height:10.5px;border:0.8px solid #6e6e6e;border-radius:5px"></div>
<div class="t" style="left:472.01px;top:109px;font-size:5.4px;color:#e6e6e6;transform:scaleX(0.903);transform-origin:0 0">Cancel</div>
<div class="a" style="left:455px;top:123px;width:48px;height:10.5px;border:0.8px solid #6e6e6e;border-radius:5px"></div>
<div class="t" style="left:460.54px;top:126px;font-size:5.4px;color:#e6e6e6;transform:scaleX(0.970);transform-origin:0 0">Add to Swatches</div>
<div class="a" style="left:455px;top:140.7px;width:48px;height:10.8px;border:0.8px solid #6e6e6e;border-radius:5px"></div>
<div class="t" style="left:463.12px;top:143.8px;font-size:5.4px;color:#e6e6e6;transform:scaleX(0.937);transform-origin:0 0">Color Libraries</div>
<!-- fields -->
<svg class="a" style="left:412px;top:155px" width="96" height="86" viewBox="412 155 96 86">
<g fill="none" stroke="#444" stroke-width="0.8">
<circle cx="417.4" cy="174" r="2.3"/><circle cx="417.4" cy="185.2" r="2.3"/><circle cx="417.4" cy="197.6" r="2.3"/><circle cx="417.4" cy="208.8" r="2.3"/><circle cx="417.4" cy="220" r="2.3"/>
<circle cx="463.6" cy="162.5" r="2.3"/><circle cx="463.6" cy="173.7" r="2.3"/><circle cx="463.6" cy="185" r="2.3"/>
</g>
<circle cx="417.4" cy="162.7" r="2.5" fill="#f0f0f0"/><circle cx="417.4" cy="162.7" r="1" fill="#333"/>
</svg>
<div style="font-size:5px;color:#cfcfcf">
<div class="t" style="left:421.6px;top:160.3px">H:</div>
<div class="t" style="left:421.6px;top:171.5px">S:</div>
<div class="t" style="left:421.6px;top:182.8px">B:</div>
<div class="t" style="left:421.6px;top:195.2px">R:</div>
<div class="t" style="left:421.6px;top:206.4px">G:</div>
<div class="t" style="left:421.6px;top:217.6px">B:</div>
<div class="t" style="left:416.4px;top:229.8px">#</div>
<div class="t" style="left:467.8px;top:160.2px">L:</div>
<div class="t" style="left:467.8px;top:171.4px">a:</div>
<div class="t" style="left:467.8px;top:182.6px">b:</div>
<div class="t" style="left:472.4px;top:195.2px">C:</div>
<div class="t" style="left:471.4px;top:206.4px">M:</div>
<div class="t" style="left:472.4px;top:217.6px">Y:</div>
<div class="t" style="left:472.4px;top:229.6px">K:</div>
<div class="t" style="left:451px;top:160px">&#176;</div>
<div class="t" style="left:450.6px;top:171.5px">%</div>
<div class="t" style="left:450.6px;top:182.8px">%</div>
<div class="t" style="left:497px;top:195.2px">%</div>
<div class="t" style="left:497px;top:206.4px">%</div>
<div class="t" style="left:497px;top:217.6px">%</div>
<div class="t" style="left:497px;top:229.6px">%</div>
</div>
<div style="background:#474747">
<div class="a" style="left:433.3px;top:159.2px;width:13.7px;height:7.5px;background:#474747;border:0.5px solid #424242"></div>
<div class="a" style="left:433.3px;top:170.4px;width:13.7px;height:7.5px;background:#474747;border:0.5px solid #424242"></div>
<div class="a" style="left:433.3px;top:181.6px;width:13.7px;height:7.5px;background:#474747;border:0.5px solid #424242"></div>
<div class="a" style="left:433.3px;top:194px;width:13.7px;height:7.5px;background:#474747;border:0.5px solid #424242"></div>
<div class="a" style="left:433.3px;top:205.2px;width:13.7px;height:7.5px;background:#474747;border:0.5px solid #424242"></div>
<div class="a" style="left:433.3px;top:216.4px;width:13.7px;height:7.5px;background:#474747;border:0.5px solid #424242"></div>
<div class="a" style="left:480px;top:159px;width:16px;height:7.5px;background:#474747;border:0.5px solid #424242"></div>
<div class="a" style="left:480px;top:170.2px;width:16px;height:7.5px;background:#474747;border:0.5px solid #424242"></div>
<div class="a" style="left:480px;top:181.4px;width:16px;height:7.5px;background:#474747;border:0.5px solid #424242"></div>
<div class="a" style="left:480px;top:194px;width:13.4px;height:7.5px;background:#474747;border:0.5px solid #424242"></div>
<div class="a" style="left:480px;top:205.2px;width:13.4px;height:7.5px;background:#474747;border:0.5px solid #424242"></div>
<div class="a" style="left:480px;top:216.4px;width:13.4px;height:7.5px;background:#474747;border:0.5px solid #424242"></div>
<div class="a" style="left:480px;top:228.2px;width:13.4px;height:7.5px;background:#474747;border:0.5px solid #424242"></div>
</div>
<div class="a" style="left:421.5px;top:228.7px;width:34.5px;height:8.9px;background:#474747;border:0.6px solid #2f5f9a"></div>
<div class="a" style="left:423px;top:230.2px;width:19.4px;height:5.8px;background:#2d7be0"></div>
<div style="font-size:5px;color:#e4e4e4">
<div class="t" style="left:435px;top:160.6px">33</div>
<div class="t" style="left:435px;top:171.8px">28</div>
<div class="t" style="left:435px;top:183px">27</div>
<div class="t" style="left:435px;top:195.4px">70</div>
<div class="t" style="left:435px;top:206.6px">61</div>
<div class="t" style="left:435px;top:217.8px">50</div>
<div class="t" style="left:481.6px;top:160.4px">26</div>
<div class="t" style="left:481.6px;top:171.6px">2</div>
<div class="t" style="left:481.6px;top:182.8px">8</div>
<div class="t" style="left:481.6px;top:195.4px">59</div>
<div class="t" style="left:481.6px;top:206.6px">60</div>
<div class="t" style="left:481.6px;top:217.8px">70</div>
<div class="t" style="left:481.6px;top:229.8px">53</div>
<div class="t" style="left:423.4px;top:230.8px;color:#ffffff">463d32</div>
</div>
<div class="a" style="left:289.4px;top:212.9px;width:5.2px;height:5.6px;background:#4e4e4e;border:0.7px solid #6e6e6e;border-radius:0.8px"></div>
<div class="t" style="left:297.00px;top:213px;font-size:5.2px;color:#d8d8d8;transform:scaleX(0.991);transform-origin:0 0">Only Web Colors</div>
<!-- activate windows watermark -->
<div class="t" style="left:666.59px;top:396px;font-size:8.5px;color:rgba(200,200,200,0.5);transform:scaleX(0.966);transform-origin:0 0">Activate Windows</div>
<div class="t" style="left:666.59px;top:406.2px;font-size:6.4px;color:rgba(200,200,200,0.5);transform:scaleX(0.972);transform-origin:0 0">Go to Settings to activate Windows.</div>
<!-- status bar text -->
<div class="t" style="left:20.00px;top:428.4px;font-size:4.6px;color:#d8d8d8;transform:scaleX(0.875);transform-origin:0 0">30.77%</div>
<div class="a" style="left:38px;top:427px;width:0.6px;height:6px;background:#3e3e3e"></div>
<div class="t" style="left:48.00px;top:428.4px;font-size:4.6px;color:#cfcfcf;transform:scaleX(0.889);transform-origin:0 0">2048 px x 2048 px (72 ppi)</div>
<svg class="a" style="left:106px;top:427px" width="16" height="6" viewBox="0 0 16 6"><path d="M4 1.2L5.6 3L4 4.8" fill="none" stroke="#ccc" stroke-width="0.6"/><path d="M12.4 1.2L10.8 3L12.4 4.8" fill="none" stroke="#888" stroke-width="0.6"/></svg>
</body></html>
